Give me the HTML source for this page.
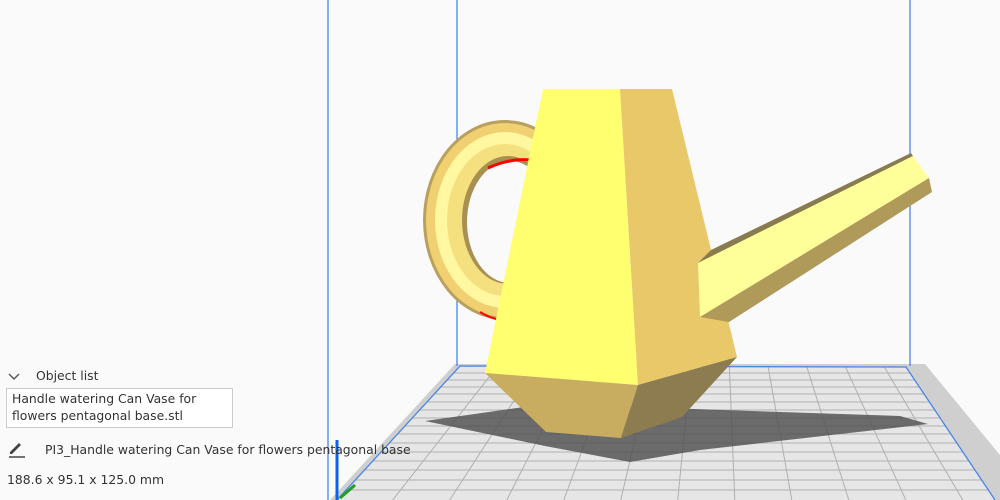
<!DOCTYPE html>
<html><head><meta charset="utf-8"><style>
html,body{margin:0;width:1000px;height:500px;overflow:hidden}
body{background:#fafafa;font-family:"Liberation Sans","DejaVu Sans",sans-serif;position:relative}
svg{position:absolute;left:0;top:0}
.t{position:absolute;color:#333;font-size:12.4px;font-family:"DejaVu Sans","Liberation Sans",sans-serif;white-space:nowrap}
</style></head><body>
<svg width="1000" height="500" viewBox="0 0 1000 500">
<defs><clipPath id="bed"><polygon points="460,366 906,367 995,500 337,500"/></clipPath></defs>
<polygon points="455,364 925,364 1000,455 1000,500 330,500" fill="#cfcfcf"/>
<polygon points="460,366 906,367 995,500 337,500" fill="#e6e6e6"/>
<g clip-path="url(#bed)" stroke="#b0b0b0" stroke-width="1">
<line x1="300" y1="373" x2="1000" y2="373"/><line x1="300" y1="380" x2="1000" y2="380"/>
<line x1="300" y1="387" x2="1000" y2="387"/><line x1="300" y1="394" x2="1000" y2="394"/>
<line x1="300" y1="402" x2="1000" y2="402"/><line x1="300" y1="410" x2="1000" y2="410"/>
<line x1="300" y1="418" x2="1000" y2="418"/><line x1="300" y1="426" x2="1000" y2="426"/>
<line x1="300" y1="434" x2="1000" y2="434"/><line x1="300" y1="443" x2="1000" y2="443"/>
<line x1="300" y1="452" x2="1000" y2="452"/><line x1="300" y1="461" x2="1000" y2="461"/>
<line x1="300" y1="470" x2="1000" y2="470"/><line x1="300" y1="480" x2="1000" y2="480"/>
<line x1="300" y1="490" x2="1000" y2="490"/>
<line x1="718" y1="85" x2="262" y2="580"/><line x1="718" y1="85" x2="330" y2="580"/>
<line x1="718" y1="85" x2="398" y2="580"/><line x1="718" y1="85" x2="466" y2="580"/>
<line x1="718" y1="85" x2="534" y2="580"/><line x1="718" y1="85" x2="602" y2="580"/>
<line x1="718" y1="85" x2="670" y2="580"/><line x1="718" y1="85" x2="738" y2="580"/>
<line x1="718" y1="85" x2="806" y2="580"/><line x1="718" y1="85" x2="874" y2="580"/>
<line x1="718" y1="85" x2="942" y2="580"/><line x1="718" y1="85" x2="1010" y2="580"/>
<line x1="718" y1="85" x2="1078" y2="580"/>
</g>
<polygon points="425,421 545,404 900,416 928,424 700,450 630,462 545,446" fill="#555" opacity="0.85"/>
<polyline points="337,500 460,366 906,367 995,500" fill="none" stroke="#4a86e8" stroke-width="1.3"/>
<line x1="328" y1="0" x2="328" y2="500" stroke="#4a86e8" stroke-width="1.3"/>
<line x1="457" y1="0" x2="457" y2="366" stroke="#4a86e8" stroke-width="1.3"/>
<line x1="910" y1="0" x2="910" y2="366" stroke="#4a86e8" stroke-width="1.3"/>
<line x1="337" y1="440" x2="337" y2="500" stroke="#1060f0" stroke-width="3"/>
<line x1="340" y1="498" x2="355" y2="485" stroke="#20a020" stroke-width="3"/>
<ellipse cx="505" cy="220" rx="82" ry="100" fill="#b8a060"/>
<ellipse cx="505" cy="220" rx="79" ry="97" fill="#f0d070"/>
<ellipse cx="505" cy="220" rx="70" ry="88" fill="#fff8a0"/>
<ellipse cx="505" cy="220" rx="58" ry="76" fill="#f5e080"/>
<ellipse cx="508" cy="220" rx="46" ry="64" fill="#a89050"/>
<ellipse cx="510" cy="222" rx="43" ry="61" fill="#fafafa"/>
<path d="M488 168 Q510 158 530 160" stroke="#f00" stroke-width="3" fill="none"/>
<path d="M480 312 Q490 318 500 320" stroke="#f00" stroke-width="2" fill="none"/>
<polygon points="543,89 620,89 638,385 485,373" fill="#ffff70"/>
<polygon points="620,89 672,89 737,357 638,385" fill="#e8c868"/>
<polygon points="485,373 638,385 621,438 546,432" fill="#c8ac60"/>
<polygon points="638,385 737,357 682,417 621,438" fill="#8c7c50"/>
<polygon points="711,250 911,153 913,156 698,263" fill="#8a7a50"/>
<polygon points="698,263 913,156 929,178 700,317" fill="#ffff9a"/>
<polygon points="700,317 929,178 932,192 729,322" fill="#b09a5a"/>
</svg>
<svg width="14" height="10" style="left:8px;top:372px"><path d="M1 2 L6 7 L11 2" stroke="#555" stroke-width="1.4" fill="none"/></svg>
<div class="t" style="left:36px;top:368px">Object list</div>
<div style="position:absolute;left:6px;top:388px;width:225px;height:38px;border:1px solid #ccc;background:#fff"></div>
<div class="t" style="left:12px;top:390px;line-height:17px">Handle watering Can Vase for<br>flowers pentagonal base.stl</div>
<svg width="20" height="20" style="left:8px;top:440px"><path d="M2 12 L11 3 L13 5 L4 14 L2 14Z" fill="#444"/><line x1="1" y1="17" x2="17" y2="17" stroke="#444" stroke-width="1.5"/></svg>
<div class="t" style="left:45px;top:442px">PI3_Handle watering Can Vase for flowers pentagonal base</div>
<div class="t" style="left:7px;top:472px">188.6 x 95.1 x 125.0 mm</div>
</body></html>
